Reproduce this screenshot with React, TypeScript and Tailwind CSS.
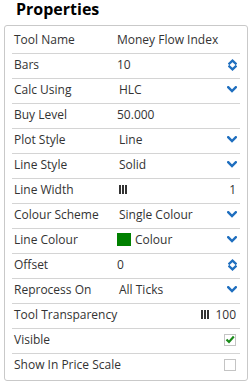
import React from 'react';

type Row = {
  label: string;
  value?: React.ReactNode;
  kind: 'text' | 'spin' | 'select' | 'slider' | 'check' | 'colour' | 'transparency';
  checked?: boolean;
};

const Chevron = () => (
  <svg width="10" height="7" viewBox="0 0 10 7" className="shrink-0">
    <path d="M1.2 1.2 L5 5 L8.8 1.2" fill="none" stroke="#1f6fbf" strokeWidth="2.4" strokeLinecap="square" />
  </svg>
);

const Spinner = () => (
  <svg width="9" height="12" viewBox="0 0 9 12" className="shrink-0">
    <path d="M1.3 4.6 L4.5 1.6 L7.7 4.6" fill="none" stroke="#1f6fbf" strokeWidth="2.2" strokeLinecap="square" />
    <path d="M1.3 7.4 L4.5 10.4 L7.7 7.4" fill="none" stroke="#1f6fbf" strokeWidth="2.2" strokeLinecap="square" />
  </svg>
);

const Grip = () => (
  <svg width="8" height="9" viewBox="0 0 8 9" className="shrink-0">
    <rect x="0" y="0" width="2" height="9" fill="#333" />
    <rect x="3" y="0" width="2" height="9" fill="#333" />
    <rect x="6" y="0" width="2" height="9" fill="#333" />
  </svg>
);

const Checkbox = ({ checked }: { checked?: boolean }) => (
  <div className="w-[12px] h-[12px] border border-[#c4c4c4] bg-white flex items-center justify-center">
    {checked && (
      <svg width="10" height="9" viewBox="0 0 10 9">
        <path d="M1.5 4.5 L4 7 L8.8 1.5" fill="none" stroke="#1a8a1a" strokeWidth="2.2" />
      </svg>
    )}
  </div>
);

const rows: Row[] = [
  { label: 'Tool Name', value: 'Money Flow Index', kind: 'text' },
  { label: 'Bars', value: '10', kind: 'spin' },
  { label: 'Calc Using', value: 'HLC', kind: 'select' },
  { label: 'Buy Level', value: '50.000', kind: 'text' },
  { label: 'Plot Style', value: 'Line', kind: 'select' },
  { label: 'Line Style', value: 'Solid', kind: 'select' },
  { label: 'Line Width', value: '1', kind: 'slider' },
  { label: 'Colour Scheme', value: 'Single Colour', kind: 'select' },
  { label: 'Line Colour', value: 'Colour', kind: 'colour' },
  { label: 'Offset', value: '0', kind: 'spin' },
  { label: 'Reprocess On', value: 'All Ticks', kind: 'select' },
  { label: 'Tool Transparency', value: '100', kind: 'transparency' },
  { label: 'Visible', kind: 'check', checked: true },
  { label: 'Show In Price Scale', kind: 'check', checked: false },
];

const RowValue = ({ row }: { row: Row }) => {
  switch (row.kind) {
    case 'text':
      return <span className="flex-1">{row.value}</span>;
    case 'spin':
      return (
        <>
          <span className="flex-1">{row.value}</span>
          <Spinner />
        </>
      );
    case 'select':
      return (
        <>
          <span className="flex-1 pl-[2px]">{row.value}</span>
          <Chevron />
        </>
      );
    case 'colour':
      return (
        <>
          <div className="flex-1 flex items-center">
            <div className="w-[14px] h-[13px] bg-[#008000] mr-[4px]" />
            <span>{row.value}</span>
          </div>
          <Chevron />
        </>
      );
    case 'slider':
      return (
        <>
          <div className="flex-1 pl-[2px] flex items-center">
            <Grip />
          </div>
          <span className="pr-[1px]">{row.value}</span>
        </>
      );
    case 'transparency':
      return (
        <div className="flex-1 flex items-center justify-end gap-[6px] pr-[1px]">
          <Grip />
          <span>{row.value}</span>
        </div>
      );
    case 'check':
      return (
        <div className="flex-1 flex justify-end pr-[1px]">
          <Checkbox checked={row.checked} />
        </div>
      );
  }
};

export default function App() {
  return (
    <div className="w-[251px] h-[383px] bg-white text-[#333] font-['Open_Sans',sans-serif]">
      <div className="h-[25px] pl-4 text-[16px] leading-[18px] font-bold text-black">Properties</div>
      <div className="ml-[4px] w-[244px] border border-[#c9c9c9] rounded-[3px] px-[7px] pt-[3px] pb-[1px]">
        {rows.map((row, i) => (
          <div
            key={row.label}
            className={`h-[25px] flex items-center pb-[3px] pr-[3px] text-[12px] leading-[16px] ${
              i < rows.length - 1 ? 'border-b border-[#d4d4d4]' : ''
            }`}
          >
            <span className="w-[105px] pl-[2px] shrink-0 whitespace-nowrap">{row.label}</span>
            <RowValue row={row} />
          </div>
        ))}
      </div>
    </div>
  );
}
